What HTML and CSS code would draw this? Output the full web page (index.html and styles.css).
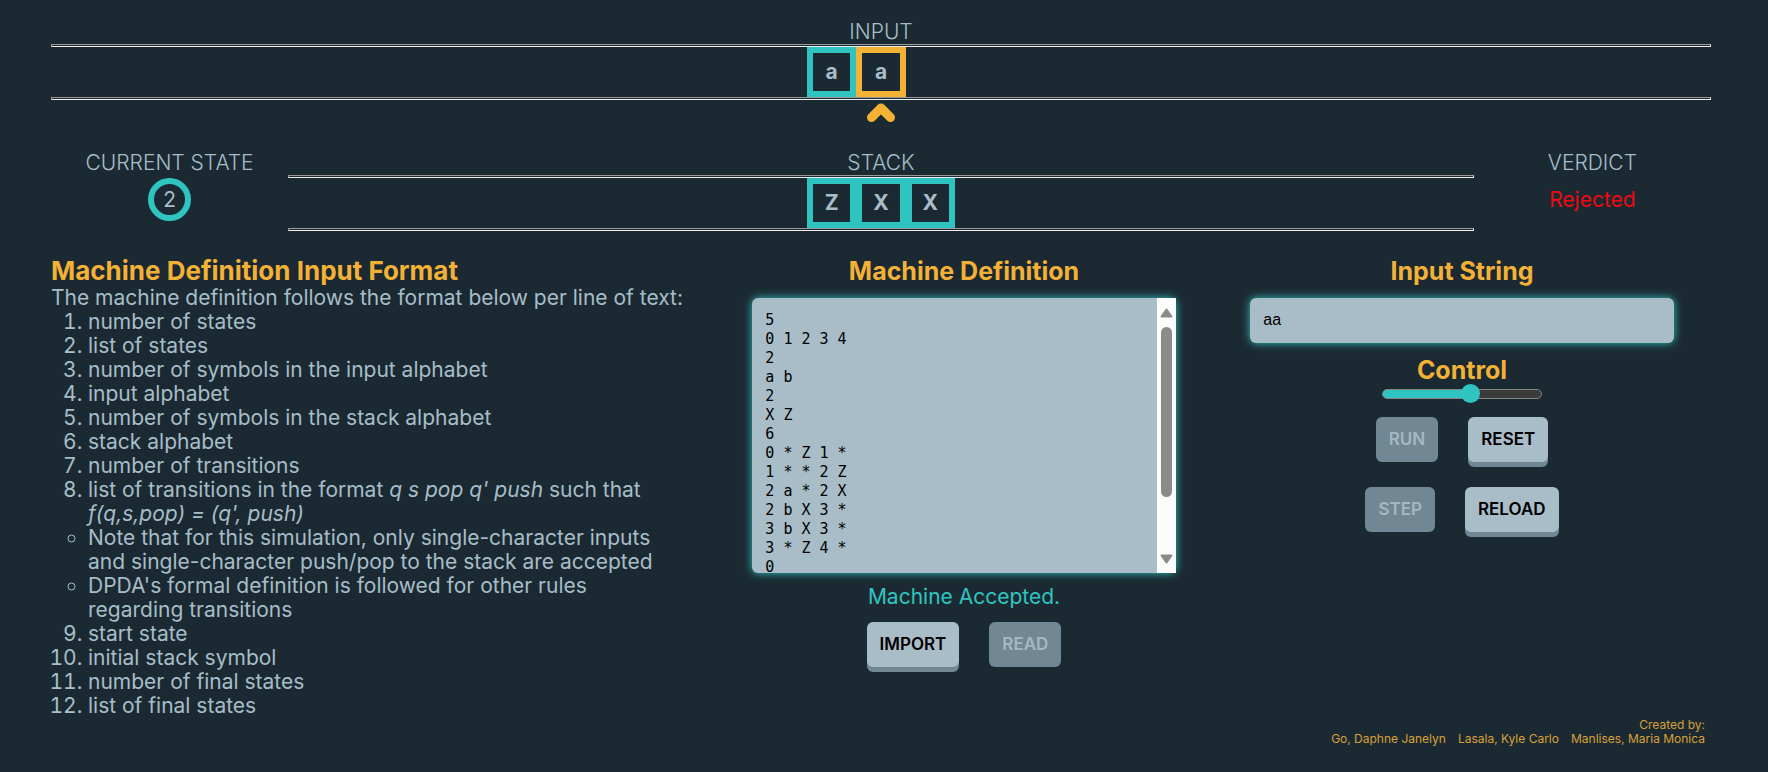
FILE: index.html
```html
<!DOCTYPE html>
<html lang="en">
<head>
<meta charset="utf-8">
<title>DPDA Simulator</title>
<meta name="viewport" content="width=device-width, initial-scale=1">
<link rel="stylesheet" href="styles.css">
</head>
<body>
<main class="page">
  <section class="tape">
    <h2 class="label">INPUT</h2>
    <hr class="rail">
    <div class="cells">
      <span class="cell">a</span>
      <span class="cell cell-active">a</span>
    </div>
    <hr class="rail">
    <svg class="pointer" viewBox="0 0 28 19" aria-hidden="true"><path d="M4.500 14.500 L14 5 L23.500 14.500"/></svg>
  </section>

  <div class="status">
    <section class="side">
      <h2 class="label">CURRENT STATE</h2>
      <span class="state">2</span>
    </section>
    <section class="tape">
      <h2 class="label">STACK</h2>
      <hr class="rail">
      <div class="cells">
        <span class="cell">Z</span>
        <span class="cell">X</span>
        <span class="cell">X</span>
      </div>
      <hr class="rail">
    </section>
    <section class="side">
      <h2 class="label">VERDICT</h2>
      <span class="verdict">Rejected</span>
    </section>
  </div>

  <div class="panels">
    <section class="format">
      <h3 class="title">Machine Definition Input Format</h3>
      <p class="intro">The machine definition follows the format below per line of text:</p>
      <ol class="rules">
        <li>number of states</li>
        <li>list of states</li>
        <li>number of symbols in the input alphabet</li>
        <li>input alphabet</li>
        <li>number of symbols in the stack alphabet</li>
        <li>stack alphabet</li>
        <li>number of transitions</li>
        <li>list of transitions in the format <i>q s pop q' push</i> such that <i>f(q,s,pop) = (q', push)</i>
          <ul class="notes">
            <li>Note that for this simulation, only single-character inputs and single-character push/pop to the stack are accepted</li>
            <li>DPDA's formal definition is followed for other rules regarding transitions</li>
          </ul>
        </li>
        <li>start state</li>
        <li>initial stack symbol</li>
        <li>number of final states</li>
        <li>list of final states</li>
      </ol>
    </section>

    <section class="panel">
      <label class="title" for="machine">Machine Definition</label>
      <div class="field editor">
        <textarea class="machine" id="machine" spellcheck="false">5
0 1 2 3 4
2
a b
2
X Z
6
0 * Z 1 *
1 * * 2 Z
2 a * 2 X
2 b X 3 *
3 b X 3 *
3 * Z 4 *
0
Z
1
4</textarea>
        <div class="scrollbar" aria-hidden="true">
          <svg class="arrow" viewBox="0 0 13 10"><path d="M6.500 1.500 L11.500 8.500 H1.500 Z"/></svg>
          <div class="track"><div class="thumb"></div></div>
          <svg class="arrow" viewBox="0 0 13 10"><path d="M6.500 8.500 L11.500 1.500 H1.500 Z"/></svg>
        </div>
      </div>
      <p class="message">Machine Accepted.</p>
      <div class="buttons">
        <button class="button" type="button">IMPORT</button>
        <button class="button" type="button" disabled>READ</button>
      </div>
    </section>

    <section class="panel">
      <label class="title" for="string">Input String</label>
      <input class="field string" id="string" type="text" value="aa">
      <label class="title title-control" for="speed">Control</label>
      <input class="speed" id="speed" type="range" min="0" max="100" value="56">
      <div class="buttons">
        <button class="button" type="button" disabled>RUN</button>
        <button class="button" type="button">RESET</button>
      </div>
      <div class="buttons">
        <button class="button" type="button" disabled>STEP</button>
        <button class="button" type="button">RELOAD</button>
      </div>
    </section>
  </div>

  <footer class="credits">
    <p>Created by:</p>
    <p class="names"><span>Go, Daphne Janelyn</span><span>Lasala, Kyle Carlo</span><span>Manlises, Maria Monica</span></p>
  </footer>
</main>
</body>
</html>
```
FILE: styles.css
```css
:root {
  --bg: #1b2a32;
  --text: #a7bdc8;
  --muted: #718793;
  --teal: #30c4c0;
  --amber: #f3b136;
}

* { box-sizing: border-box; }

body {
  margin: 0;
  background: var(--bg);
  color: var(--text);
  font-family: Inter, "Open Sans", sans-serif;
  font-size: 21px;
  line-height: 24px;
}

h2, h3, p, ol, ul { margin: 0; padding: 0; }

.page { padding: 20px 57px 24px 51px; }

.label {
  font-size: 21px;
  font-weight: 300;
  line-height: 24px;
  text-align: center;
}

.tape {
  display: flex;
  flex-direction: column;
}

.rail {
  width: 100%;
  height: 3px;
  margin: 0;
  border: 1px solid;
  border-color: #9a9a9a #eeeeee #eeeeee #9a9a9a;
}

.cells {
  display: grid;
  grid-template-columns: repeat(3, 1fr);
  width: 148px;
  margin: 0 auto;
}

.cell {
  display: grid;
  place-items: center;
  height: 50px;
  border: 6px solid var(--teal);
  font-size: 21px;
  font-weight: 700;
}

.cell-active { border-color: var(--amber); }

.pointer {
  width: 28px;
  height: 19px;
  margin: 3px auto 0;
  fill: none;
  stroke: var(--amber);
  stroke-width: 9;
  stroke-linecap: round;
  stroke-linejoin: round;
}

.status {
  display: grid;
  grid-template-columns: 1fr 5fr 1fr;
  margin-top: 29px;
}

.side {
  display: flex;
  flex-direction: column;
  align-items: center;
  gap: 3px;
}

.state {
  display: grid;
  place-items: center;
  width: 43px;
  height: 43px;
  border: 6px solid var(--teal);
  border-radius: 50%;
}

.verdict {
  color: #f00810;
  line-height: 43px;
}

.panels {
  display: grid;
  grid-template-columns: 4fr 3fr 3fr;
  margin-top: 25px;
}

.title {
  color: var(--amber);
  font-size: 25px;
  font-weight: 700;
  line-height: 30px;
}

.format { padding-right: 30px; }

.format .title { font-size: 26px; }

.rules { padding-left: 37px; }

.notes { list-style: circle; }

.panel {
  display: flex;
  flex-direction: column;
  align-items: center;
}

.field {
  width: 85%;
  margin: 12px 0 0;
  border: 0;
  border-radius: 6px;
  background: #a8bdc8;
  box-shadow: 0 0 8px var(--teal);
  color: #000;
  outline: 0;
}

.editor {
  display: flex;
  height: 275px;
}

.machine {
  flex: 1;
  min-width: 0;
  padding: 13px 13px 0;
  border: 0;
  background: transparent;
  color: #000;
  outline: 0;
  resize: none;
  overflow-y: auto;
  scrollbar-width: none;
  font: 15px/19px "DejaVu Sans Mono", monospace;
}

.scrollbar {
  display: flex;
  flex-direction: column;
  align-items: center;
  gap: 9px;
  width: 19px;
  padding: 10px 0 9px;
  background: #fcfcfc;
}

.arrow {
  width: 13px;
  height: 10px;
  fill: #8b8b8b;
  stroke: #8b8b8b;
  stroke-width: 2;
  stroke-linejoin: round;
}

.track {
  flex: 1;
  width: 11px;
}

.thumb {
  height: 78%;
  border-radius: 6px;
  background: #8b8b8b;
}

.string {
  height: 45px;
  padding: 0 13px 2px;
  font: 16px/20px "Liberation Sans", sans-serif;
}

.message {
  margin-top: 12px;
  color: var(--teal);
}

.buttons {
  display: flex;
  gap: 30px;
  margin-top: 13px;
}

.buttons + .buttons { margin-top: 25px; }

.button {
  height: 45px;
  padding: 0 13px 2px;
  border: 0;
  border-radius: 6px;
  background: #a8bdc8;
  box-shadow: 0 5px var(--muted);
  color: #000;
  font: 600 17px/20px Inter, "Open Sans", sans-serif;
}

.button:disabled {
  background: var(--muted);
  box-shadow: none;
  color: #a3b8c4;
}

.title-control { margin-top: 12px; }

.speed {
  appearance: none;
  width: 160px;
  height: 17px;
  margin: 0 0 2px;
  background: transparent;
}

.speed::-webkit-slider-runnable-track {
  height: 10px;
  border: 1px solid #858585;
  border-radius: 5px;
  background: linear-gradient(to right, var(--teal) 55%, #3b3b3b 55%);
}

.speed::-webkit-slider-thumb {
  appearance: none;
  width: 19px;
  height: 19px;
  margin-top: -6px;
  border-radius: 50%;
  background: var(--teal);
}

.credits {
  display: flex;
  flex-direction: column;
  align-items: flex-end;
  padding-right: 6px;
  color: #d9a036;
  font-size: 12px;
  line-height: 14px;
}

.names {
  display: flex;
  gap: 12px;
}
```
